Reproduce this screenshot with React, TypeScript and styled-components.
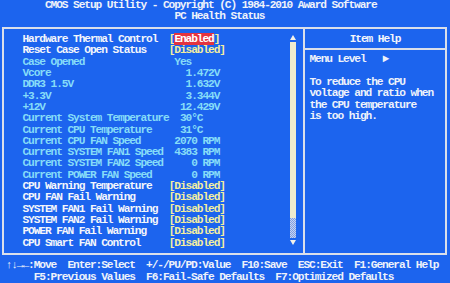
import React from 'react';
import styled, { createGlobalStyle } from 'styled-components';

// BIOS text grid: 80 columns x 25 rows squeezed into 450x283
const CW = 5.625;
const RH = 11.32;

const GlobalStyle = createGlobalStyle`
  html, body {
    margin: 0;
    padding: 0;
    background: #1c64ee;
  }
  body {
    width: 450px;
    height: 283px;
    overflow: hidden;
  }
`;

const Screen = styled.div`
  width: 450px;
  height: 283px;
  box-sizing: border-box;
  background: #1c64ee;
  font-family: "Liberation Mono", "DejaVu Sans Mono", monospace;
  font-weight: bold;
  font-size: 11.2px;
  letter-spacing: ${CW - 11.2 * 0.6}px;
  line-height: ${RH}px;
  color: #eef2fa;
  white-space: pre;
  display: flex;
  flex-direction: column;
  overflow: hidden;
`;

const Line = styled.div<{ $col: number }>`
  height: ${RH}px;
  padding-left: ${p => p.$col * CW}px;
`;

const Frame = styled.div`
  box-sizing: border-box;
  margin: 4.4px 0 0 2px;
  width: 445px;
  height: 228px;
  border: 2px solid #dadfea;
  display: grid;
  grid-template-columns: 1fr 140px;
`;

const MainPanel = styled.div`
  border-right: 2px solid #dadfea;
  padding-top: 5px;
  display: flex;
`;

const ItemList = styled.div`
  flex: 1;
  padding-left: 18.5px;
`;

const ItemRow = styled.div`
  display: grid;
  grid-template-columns: ${26 * CW}px 1fr;
  height: ${RH}px;
`;

const Label = styled.span<{ $read?: boolean }>`
  color: ${p => (p.$read ? '#86dcf8' : '#f4f6fb')};
`;

const Value = styled.span<{ $read?: boolean }>`
  color: ${p => (p.$read ? '#86dcf8' : '#f3eea0')};
`;

const Selected = styled.span`
  background: #e4343f;
  color: #ffffff;
`;

const ScrollCol = styled.div`
  width: 6px;
  margin: 1px 7px 8px 0;
  display: flex;
  flex-direction: column;
  align-items: center;
  gap: 2px;
`;

const Arrow = styled.div<{ $down?: boolean }>`
  width: 0;
  height: 0;
  border-left: 3px solid transparent;
  border-right: 3px solid transparent;
  ${p =>
    p.$down
      ? 'border-top: 5px solid #f2f2ea;'
      : 'border-bottom: 5px solid #f2f2ea;'}
`;

const Track = styled.div`
  flex: 1;
  width: 6px;
  background:
    linear-gradient(#efecce 0 90%, transparent 90%),
    repeating-conic-gradient(#c9d4ee 0 25%, #7fa0e6 0 50%) 0 0 / 2px 2px;
`;

const HelpPanel = styled.div`
  display: flex;
  flex-direction: column;
`;

const HelpHeader = styled.div`
  height: 14px;
  padding-top: 5px;
  text-align: center;
  color: #f4f6fb;
  border-bottom: 2px solid #dadfea;
`;

const HelpBody = styled.div`
  padding: 4.3px 0 0 4.4px;
  color: #eef2fa;
`;

const HelpLine = styled.div`
  height: ${RH}px;
`;

const Footer = styled.div`
  margin-top: 5.4px;
  color: #eef2fa;
`;

type Item = {
  label: string;
  value: string;
  read?: boolean;
  selected?: boolean;
};

const items: Item[] = [
  { label: 'Hardware Thermal Control', value: 'Enabled', selected: true },
  { label: 'Reset Case Open Status', value: '[Disabled]' },
  { label: 'Case Opened', value: ' Yes', read: true },
  { label: 'Vcore', value: '   1.472V', read: true },
  { label: 'DDR3 1.5V', value: '   1.632V', read: true },
  { label: '+3.3V', value: '   3.344V', read: true },
  { label: '+12V', value: '  12.429V', read: true },
  { label: 'Current System Temperature', value: '  30°C', read: true },
  { label: 'Current CPU Temperature', value: '  31°C', read: true },
  { label: 'Current CPU FAN Speed', value: ' 2070 RPM', read: true },
  { label: 'Current SYSTEM FAN1 Speed', value: ' 4383 RPM', read: true },
  { label: 'Current SYSTEM FAN2 Speed', value: '    0 RPM', read: true },
  { label: 'Current POWER FAN Speed', value: '    0 RPM', read: true },
  { label: 'CPU Warning Temperature', value: '[Disabled]' },
  { label: 'CPU FAN Fail Warning', value: '[Disabled]' },
  { label: 'SYSTEM FAN1 Fail Warning', value: '[Disabled]' },
  { label: 'SYSTEM FAN2 Fail Warning', value: '[Disabled]' },
  { label: 'POWER FAN Fail Warning', value: '[Disabled]' },
  { label: 'CPU Smart FAN Control', value: '[Disabled]' },
];

const helpText = [
  'Menu Level   \u25BA',
  '',
  'To reduce the CPU',
  'voltage and ratio when',
  'the CPU temperature',
  'is too high.',
];

export default function App() {
  return (
    <Screen>
      <GlobalStyle />
      <Line $col={8}>CMOS Setup Utility - Copyright (C) 1984-2010 Award Software</Line>
      <Line $col={31}>PC Health Status</Line>

      <Frame>
        <MainPanel>
          <ItemList>
            {items.map(item => (
              <ItemRow key={item.label}>
                <Label $read={item.read}>{item.label}</Label>
                {item.selected ? (
                  <Value>
                    [<Selected>{item.value}</Selected>]
                  </Value>
                ) : (
                  <Value $read={item.read}>{item.value}</Value>
                )}
              </ItemRow>
            ))}
          </ItemList>
          <ScrollCol>
            <Arrow />
            <Track />
            <Arrow $down />
          </ScrollCol>
        </MainPanel>

        <HelpPanel>
          <HelpHeader>Item Help</HelpHeader>
          <HelpBody>
            {helpText.map((t, i) => (
              <HelpLine key={i}>{t}</HelpLine>
            ))}
          </HelpBody>
        </HelpPanel>
      </Frame>

      <Footer>
        <Line $col={1}>↑↓→←:Move  Enter:Select  +/-/PU/PD:Value  F10:Save  ESC:Exit  F1:General Help</Line>
        <Line $col={6}>F5:Previous Values  F6:Fail-Safe Defaults  F7:Optimized Defaults</Line>
      </Footer>
    </Screen>
  );
}
